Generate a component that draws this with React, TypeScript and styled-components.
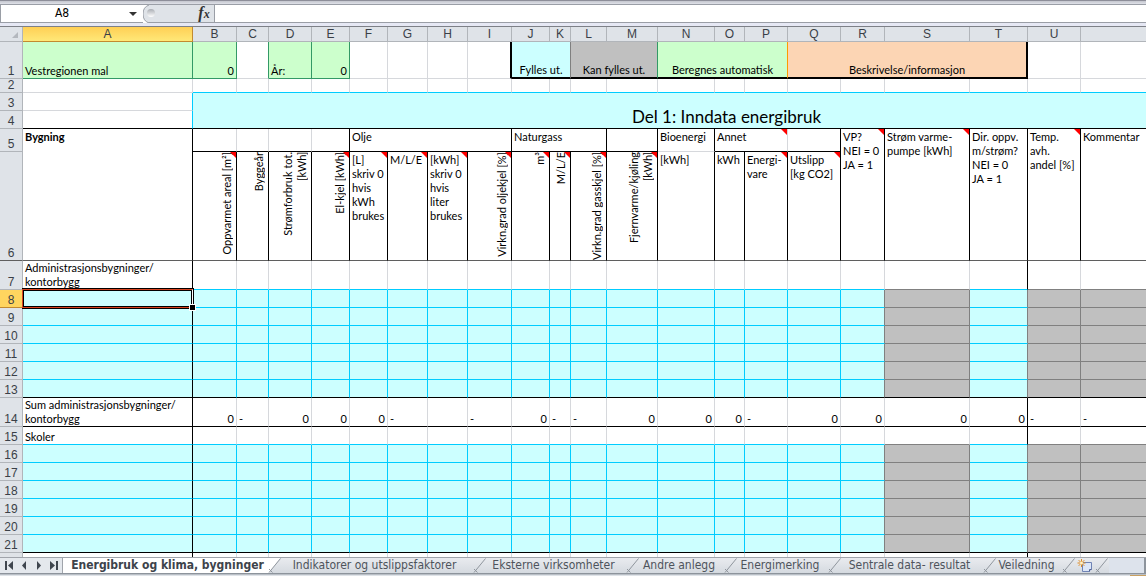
import React from "react";
import styled, { createGlobalStyle, css } from "styled-components";

const GRID = "#d6d8dc";
const BLACK = "#000000";
const CYAN = "#00ccff";
const GREY = "#808080";
const GREEN = "#339966";
const HEAD_LINE = "#b1b5ba";
const FREEZE = "#5f5f5f";

const FILL = {
  input: "#ccffff",
  optional: "#c0c0c0",
  computed: "#ccffcc",
  info: "#fcd5b4",
};

const GlobalStyle = createGlobalStyle`
  * { box-sizing: border-box; }
  body { margin: 0; background: #ffffff; }
`;

const Workbook = styled.div`
  display: flex;
  flex-direction: column;
  height: 100vh;
  overflow: hidden;
  font-family: Lato, "Liberation Sans", sans-serif;
  color: #000000;
`;

/* ---------- formula bar ---------- */

const FormulaBar = styled.div`
  display: flex;
  flex: none;
  height: 27px;
  padding-top: 4px;
  padding-bottom: 3px;
  background: linear-gradient(#8d8e99 0, #8d8e99 1px, #c4c6ce 1px, #dfe1e8 4px, #e6e8f4 4px);
  border-bottom: 1px solid #7d8087;
`;

const NameBox = styled.div`
  display: flex;
  flex: none;
  width: 143px;
  background: #ffffff;
  border: 1px solid #9a9ea6;
  border-right: 0;
`;

const NameInput = styled.input`
  flex: 1;
  min-width: 0;
  padding: 0;
  border: 0;
  outline: 0;
  background: transparent;
  text-align: center;
  color: #000000;
  font: 12px/17px "DejaVu Sans Condensed", sans-serif;
`;

const IconButton = styled.button`
  display: flex;
  align-items: center;
  justify-content: center;
  width: ${(p: { $w: number }) => p.$w}px;
  padding: 0;
  border: 0;
  background: transparent;
`;

const FunctionArea = styled.div`
  display: flex;
  justify-content: space-between;
  flex: none;
  width: 72px;
  background: #dfe3e8;
  border: solid #9a9ea6;
  border-width: 1px 1px 1px 0;
`;

const FxButton = styled.button`
  width: 20px;
  padding: 0;
  border: 0;
  background: transparent;
  color: #333333;
  font: italic bold 16px/16px "Liberation Serif", serif;

  small {
    font-size: 12px;
  }
`;

const FormulaInput = styled.input`
  flex: 1;
  min-width: 0;
  padding: 0 4px;
  border: solid #9a9ea6;
  border-width: 1px 0;
  outline: 0;
  background: #ffffff;
  font: 12px/17px "DejaVu Sans Condensed", sans-serif;
`;

/* ---------- sheet ---------- */

const SheetArea = styled.div`
  flex: 1;
  min-height: 0;
  overflow: hidden;
`;

const Sheet = styled.table`
  width: 100%;
  min-width: 1261px;
  table-layout: fixed;
  border-collapse: separate;
  border-spacing: 0;
  font-size: 11px;
  line-height: 14px;
`;

const Col = styled.col<{ $w?: number }>`
  width: ${(p) => (p.$w ? `${p.$w}px` : "auto")};
`;

const Row = styled.tr<{ $h: number }>`
  height: ${(p) => p.$h}px;
`;

const headCell = css`
  padding: 0;
  font: 12px/13px "Liberation Sans", sans-serif;
  color: #3a3f47;
  text-align: center;
  vertical-align: bottom;
  background: #dfe3e8;
  border: solid ${HEAD_LINE};
  border-width: 0 1px 1px 0;
`;

const ColumnHead = styled.th<{ $active?: boolean }>`
  ${headCell}
  ${(p) =>
    p.$active &&
    css`
      background: linear-gradient(#ffcf55, #ffe878);
      border-color: #c28a30;
    `}
`;

const RowHead = styled.th<{ $active?: boolean; $line?: string }>`
  ${headCell}
  border-bottom-color: ${(p) => p.$line ?? HEAD_LINE};
  ${(p) =>
    p.$active &&
    css`
      background: #ffd55f;
      border-color: #c28a30;
    `}
`;

const Corner = styled.td`
  ${headCell}
  text-align: right;
  line-height: 0;
`;

type CellProps = {
  $fill?: string;
  $right?: string;
  $bottom?: string;
  $thickRight?: boolean;
  $thickBottom?: boolean;
  $align?: "left" | "right" | "center";
  $top?: boolean;
  $flush?: boolean;
  $bold?: boolean;
};

const Cell = styled.td<CellProps>`
  position: relative;
  padding: ${(p) => (p.$top && !p.$flush ? "1px 2px 0" : "0 2px")};
  background: ${(p) => p.$fill ?? "#ffffff"};
  border-style: solid;
  border-color: ${(p) => `transparent ${p.$right ?? GRID} ${p.$bottom ?? GRID} transparent`};
  border-width: 0 ${(p) => (p.$thickRight ? 2 : 1)}px ${(p) => (p.$thickBottom ? 2 : 1)}px 0;
  text-align: ${(p) => p.$align ?? "left"};
  vertical-align: ${(p) => (p.$top ? "top" : "bottom")};
  font-weight: ${(p) => (p.$bold ? 700 : 400)};
  white-space: pre;
`;

const SpacerCell = styled(Cell)`
  padding: 0;
  line-height: 0;
`;

const TitleCell = styled(Cell)`
  font-size: 17px;
  line-height: 22px;
`;

const Vertical = styled.span`
  display: inline-block;
  max-height: 108px;
  writing-mode: vertical-rl;
  transform: rotate(180deg);
  text-align: right;
  vertical-align: top;
`;

const NoteMark = styled.span`
  position: absolute;
  top: 0;
  right: 0;
  border: solid transparent;
  border-width: 0 6px 6px 0;
  border-right-color: #ff0000;
`;

const Selection = styled.div`
  position: absolute;
  inset: -2px -2px -2px -1px;
  z-index: 1;
  border: solid #000000;
  border-width: 1px 1px 1px 0;

  &::before {
    content: "";
    position: absolute;
    inset: 0;
    border: 1px solid #d8431f;
    border-right-color: #ffffff;
  }

  &::after {
    content: "";
    position: absolute;
    inset: 1px;
    border: 1px solid #000000;
  }
`;

const FillHandle = styled.span`
  position: absolute;
  right: -2px;
  bottom: -2px;
  z-index: 1;
  width: 5px;
  height: 5px;
  background: #000000;
  outline: 1px solid #ffffff;
`;

/* ---------- sheet tabs ---------- */

const TabBar = styled.div`
  display: flex;
  flex: none;
  height: 17px;
  background: linear-gradient(#e9ebef, #d5dae0);
  border-top: 1px solid #a0a4ab;
  border-bottom: 1px solid #8d949c;
`;

const TabNav = styled.div`
  display: flex;
  align-items: center;
  justify-content: space-around;
  flex: none;
  width: 63px;
  padding: 0 1px;
  background: #e4e8ed;
  border-right: 1px solid #a0a4ab;
`;

const Tab = styled.button<{ $w: number; $active?: boolean }>`
  flex: none;
  width: ${(p) => p.$w}px;
  padding: ${(p) => (p.$active ? "0 0 0 4px" : "0 6px 0 0")};
  border: 0;
  background: ${(p) => (p.$active ? "#ffffff" : "transparent")};
  color: ${(p) => (p.$active ? "#3d434b" : "#4e545c")};
  text-align: center;
  white-space: nowrap;
  font: ${(p) => (p.$active ? 700 : 400)} 12px/15px "DejaVu Sans Condensed", sans-serif;
`;

const TabEdge = styled.svg`
  flex: none;
  width: 14px;
  height: 15px;
`;

const NewTab = styled(IconButton)`
  flex: none;
`;

const BarEnd = styled.div`
  flex: 1;
  background: #dde3ec;
  border-right: 2px solid #8d949c;
`;

const StatusEdge = styled.div`
  flex: none;
  height: 2px;
  background: linear-gradient(90deg, #dfe3e8 0, #dfe3e8 calc(100% - 16px), #c9a061 calc(100% - 16px));
  border-top: 1px solid #b9bfc6;
`;

/* ---------- data ---------- */

const COLUMNS: { name: string; w?: number }[] = [
  { name: "A", w: 170 },
  { name: "B", w: 44 },
  { name: "C", w: 32 },
  { name: "D", w: 43 },
  { name: "E", w: 38 },
  { name: "F", w: 38 },
  { name: "G", w: 40 },
  { name: "H", w: 40 },
  { name: "I", w: 44 },
  { name: "J", w: 38 },
  { name: "K", w: 21 },
  { name: "L", w: 36 },
  { name: "M", w: 51 },
  { name: "N", w: 57 },
  { name: "O", w: 30 },
  { name: "P", w: 43 },
  { name: "Q", w: 53 },
  { name: "R", w: 44 },
  { name: "S", w: 85 },
  { name: "T", w: 58 },
  { name: "U", w: 53 },
  { name: "" },
];

const BODY = "BCDEFGHIJKLMNOPQRSTUV".split("");
const OPTIONAL = "SUV";

const SUMS: Record<string, string> = {
  B: "0", C: "-", D: "0", E: "0", F: "0", G: "-", I: "-", J: "0", K: "-", L: "-",
  M: "0", N: "0", O: "0", P: "-", Q: "0", R: "0", S: "0", T: "0", U: "-", V: "-",
};

const UNIT_HEADS: { text: string; vertical?: boolean; note?: boolean }[] = [
  { text: "Oppvarmet areal [m²]", vertical: true, note: true },
  { text: "Byggeår", vertical: true },
  { text: "Strømforbruk tot.\n[kWh]", vertical: true },
  { text: "El-kjel [kWh]", vertical: true, note: true },
  { text: "[L]\nskriv 0\nhvis\nkWh\nbrukes", note: true },
  { text: "M/L/E", note: true },
  { text: "[kWh]\nskriv 0\nhvis\nliter\nbrukes", note: true },
  { text: "Virkn.grad oljekjel [%]", vertical: true, note: true },
  { text: "m³", vertical: true, note: true },
  { text: "M/L/E", vertical: true, note: true },
  { text: "Virkn.grad gasskjel [%]", vertical: true, note: true },
  { text: "Fjernvarme/kjøling\n[kWh]", vertical: true, note: true },
  { text: "[kWh]" },
  { text: "kWh" },
  { text: "Energi-\nvare", note: true },
  { text: "Utslipp\n[kg CO2]", note: true },
];

const TALL_HEADS: { text: string; note?: boolean }[] = [
  { text: "VP?\nNEI = 0\nJA = 1", note: true },
  { text: "Strøm varme-\npumpe [kWh]", note: true },
  { text: "Dir. oppv.\nm/strøm?\nNEI = 0\nJA = 1" },
  { text: "Temp.\navh.\nandel [%]", note: true },
  { text: "Kommentar" },
];

const TABS = [
  { name: "Indikatorer og utslippsfaktorer", w: 191 },
  { name: "Eksterne virksomheter", w: 139 },
  { name: "Andre anlegg", w: 84 },
  { name: "Energimerking", w: 90 },
  { name: "Sentrale data- resultat", w: 141 },
  { name: "Veiledning", w: 65 },
];

/* ---------- row kinds ---------- */

const EmptyCells = ({ names, bottom }: { names: string[]; bottom?: string }) => (
  <>
    {names.map((n) => (
      <Cell key={n} $bottom={bottom} />
    ))}
  </>
);

const InputRow = ({ n, last, selected }: { n: number; last?: boolean; selected?: boolean }) => (
  <Row $h={18}>
    <RowHead scope="row" $active={selected}>{n}</RowHead>
    <Cell $fill={FILL.input} $right={BLACK} $bottom={last ? BLACK : CYAN}>
      {selected && (
        <Selection>
          <FillHandle />
        </Selection>
      )}
    </Cell>
    {BODY.map((c) => {
      const optional = OPTIONAL.includes(c);
      return (
        <Cell
          key={c}
          $fill={optional ? FILL.optional : FILL.input}
          $right={"RSTUV".includes(c) ? GREY : CYAN}
          $bottom={last ? BLACK : optional ? GREY : CYAN}
        />
      );
    })}
  </Row>
);

const GroupRow = ({ n, h, title }: { n: number; h: number; title: string }) => (
  <Row $h={h}>
    <RowHead scope="row">{n}</RowHead>
    <Cell $right={BLACK} $bottom={CYAN}>{title}</Cell>
    {BODY.map((c) => (
      <Cell key={c} $right={c === "T" ? BLACK : GRID} $bottom={OPTIONAL.includes(c) ? GREY : CYAN} />
    ))}
  </Row>
);

const Arrow = ({ d }: { d: string }) => (
  <svg width="10" height="9" viewBox="0 0 10 9" fill="#3f464f" aria-hidden="true">
    <path d={d} />
  </svg>
);

const Slash = ({ afterActive }: { afterActive?: boolean }) => (
  <TabEdge viewBox="0 0 14 15" aria-hidden="true">
    {afterActive && <path d="M0 0H12L1 15H0Z" fill="#ffffff" />}
    <path d="M1 14.500L12.500 0.500" stroke="#8f959d" fill="none" />
    <path d="M1 11L4.500 14.500" stroke="#8f959d" fill="none" />
  </TabEdge>
);

const NAV = [
  { label: "Første ark", d: "M1 0h2v9H1zM9 0v9L4 4.500z" },
  { label: "Forrige ark", d: "M7 0v9L3 4.500z" },
  { label: "Neste ark", d: "M3 0v9l4-4.500z" },
  { label: "Siste ark", d: "M1 0v9l5-4.500zM7 0h2v9H7z" },
];

export default function App() {
  return (
    <Workbook>
      <GlobalStyle />
      <FormulaBar>
        <NameBox>
          <NameInput aria-label="Navneboks" defaultValue="A8" />
          <IconButton $w={20} aria-label="Vis navn">
            <svg width="8" height="4" viewBox="0 0 8 4" aria-hidden="true">
              <path d="M0 0h8L4 4z" fill="#333333" />
            </svg>
          </IconButton>
        </NameBox>
        <FunctionArea>
          <svg width="20" height="18" viewBox="0 0 20 18" aria-hidden="true">
            <defs>
              <linearGradient id="knob" x1="0" y1="0" x2="0" y2="1">
                <stop offset="0" stopColor="#a9adb3" />
                <stop offset="1" stopColor="#ffffff" />
              </linearGradient>
            </defs>
            <path d="M0 0H6Q0 2 0 9T6 18H0Z" fill="#ffffff" />
            <path d="M6 0Q0 2 0 9T6 18" fill="none" stroke="#9a9ea6" />
            <circle cx="8" cy="8" r="4" fill="url(#knob)" />
          </svg>
          <FxButton aria-label="Sett inn funksjon">
            f<small>x</small>
          </FxButton>
        </FunctionArea>
        <FormulaInput aria-label="Formellinje" />
      </FormulaBar>

      <SheetArea>
        <Sheet>
          <colgroup>
            <Col $w={23} />
            {COLUMNS.map((c, i) => (
              <Col key={i} $w={c.w} />
            ))}
          </colgroup>
          <thead>
            <Row $h={15}>
              <Corner>
                <svg width="10" height="10" viewBox="0 0 10 10" aria-hidden="true">
                  <path d="M6 1v6H0z" fill="#b4b8be" />
                </svg>
              </Corner>
              {COLUMNS.map((c, i) => (
                <ColumnHead key={i} scope="col" $active={c.name === "A"}>{c.name}</ColumnHead>
              ))}
            </Row>
          </thead>
          <tbody>
            <Row $h={37}>
              <RowHead scope="row">1</RowHead>
              <Cell $fill={FILL.computed} $right={GREEN} $bottom={GREEN}>Vestregionen mal</Cell>
              <Cell $fill={FILL.computed} $right={GREEN} $bottom={GREEN} $align="right">0</Cell>
              <Cell $right={GREEN} />
              <Cell $fill={FILL.computed} $right={GREEN} $bottom={GREEN}>År:</Cell>
              <Cell $fill={FILL.computed} $right={GREEN} $bottom={GREEN} $align="right">0</Cell>
              <EmptyCells names={["F", "G", "H"]} />
              <Cell $right={BLACK} $thickRight />
              <Cell colSpan={2} $fill={FILL.input} $right={GREY} $bottom={BLACK} $thickBottom $align="center">Fylles ut.</Cell>
              <Cell colSpan={2} $fill={FILL.optional} $right={GREEN} $bottom={BLACK} $thickBottom $align="center">Kan fylles ut.</Cell>
              <Cell colSpan={3} $fill={FILL.computed} $right="#ff9900" $bottom={BLACK} $thickBottom $align="center">Beregnes automatisk</Cell>
              <Cell colSpan={4} $fill={FILL.info} $right={BLACK} $bottom={BLACK} $thickRight $thickBottom $align="center">Beskrivelse/informasjon</Cell>
              <EmptyCells names={["U", "V"]} />
            </Row>
            <Row $h={14}>
              <RowHead scope="row">2</RowHead>
              <SpacerCell />
              {BODY.map((c) => (
                <SpacerCell key={c} $bottom={CYAN} />
              ))}
            </Row>
            <Row $h={18}>
              <RowHead scope="row">3</RowHead>
              <Cell $right={CYAN} />
              <TitleCell rowSpan={2} colSpan={21} $fill={FILL.input} $bottom={BLACK} $align="center">
                Del 1: Inndata energibruk
              </TitleCell>
            </Row>
            <Row $h={18}>
              <RowHead scope="row">4</RowHead>
              <Cell $right={CYAN} $bottom={BLACK} />
            </Row>
            <Row $h={23}>
              <RowHead scope="row">5</RowHead>
              <Cell rowSpan={2} $top $bold $right={BLACK} $bottom={FREEZE}>Bygning</Cell>
              <EmptyCells names={["B", "C", "D"]} bottom={BLACK} />
              <Cell $right={BLACK} $bottom={BLACK} />
              <Cell colSpan={4} $top $right={BLACK} $bottom={BLACK}>Olje</Cell>
              <Cell colSpan={3} $top $right={BLACK} $bottom={BLACK}>Naturgass</Cell>
              <Cell $right={BLACK} $bottom={BLACK} />
              <Cell $top $right={BLACK}>Bioenergi</Cell>
              <Cell colSpan={2} $top $bottom={BLACK}>
                Annet
                <NoteMark />
              </Cell>
              <Cell $right={BLACK} $bottom={BLACK} />
              {TALL_HEADS.map((h) => (
                <Cell key={h.text} rowSpan={2} $top $right={BLACK} $bottom={FREEZE}>
                  {h.text}
                  {h.note && <NoteMark />}
                </Cell>
              ))}
            </Row>
            <Row $h={109}>
              <RowHead scope="row" $line={FREEZE}>6</RowHead>
              {UNIT_HEADS.map((h, i) => (
                <Cell
                  key={i}
                  $top
                  $flush={h.vertical}
                  $right={BLACK}
                  $bottom={FREEZE}
                  $align={h.vertical ? "right" : "left"}
                >
                  {h.vertical ? <Vertical>{h.text}</Vertical> : h.text}
                  {h.note && <NoteMark />}
                </Cell>
              ))}
            </Row>
            <GroupRow n={7} h={29} title={"Administrasjonsbygninger/\nkontorbygg"} />
            {[8, 9, 10, 11, 12, 13].map((n) => (
              <InputRow key={n} n={n} selected={n === 8} last={n === 13} />
            ))}
            <Row $h={29}>
              <RowHead scope="row">14</RowHead>
              <Cell $right={BLACK} $bottom={BLACK}>{"Sum administrasjonsbygninger/\nkontorbygg"}</Cell>
              {BODY.map((c) => (
                <Cell
                  key={c}
                  $right={c === "T" ? BLACK : GRID}
                  $bottom={BLACK}
                  $align={SUMS[c] === "0" ? "right" : "left"}
                >
                  {SUMS[c]}
                </Cell>
              ))}
            </Row>
            <GroupRow n={15} h={18} title="Skoler" />
            {[16, 17, 18, 19, 20, 21].map((n) => (
              <InputRow key={n} n={n} last={n === 21} />
            ))}
            <Row $h={18}>
              <RowHead scope="row" />
              <Cell $right={BLACK} />
              {BODY.map((c) => (
                <Cell key={c} $right={c === "T" ? BLACK : GRID} />
              ))}
            </Row>
          </tbody>
        </Sheet>
      </SheetArea>

      <TabBar>
        <TabNav>
          {NAV.map((b) => (
            <IconButton key={b.label} $w={14} aria-label={b.label}>
              <Arrow d={b.d} />
            </IconButton>
          ))}
        </TabNav>
        <Tab $w={205} $active>Energibruk og klima, bygninger</Tab>
        {TABS.map((t, i) => (
          <React.Fragment key={t.name}>
            <Slash afterActive={i === 0} />
            <Tab $w={t.w}>{t.name}</Tab>
          </React.Fragment>
        ))}
        <Slash />
        <NewTab $w={19} aria-label="Sett inn regneark">
          <svg width="17" height="14" viewBox="0 0 17 14" aria-hidden="true">
            <path d="M5.500 3.500h9v7l-2 2h-7z" fill="#dce6f7" stroke="#6f83b5" />
            <path d="M14.500 10.500h-2v2" fill="#ffffff" stroke="#4c5f94" />
            <path d="M4.500 0v8M0.500 4h8M1.700 1.200l5.600 5.600M7.300 1.200L1.700 6.800" stroke="#e08a1e" />
            <circle cx="4.500" cy="4" r="1.500" fill="#fff3c4" />
          </svg>
        </NewTab>
        <Slash />
        <BarEnd />
      </TabBar>
      <StatusEdge />
    </Workbook>
  );
}
